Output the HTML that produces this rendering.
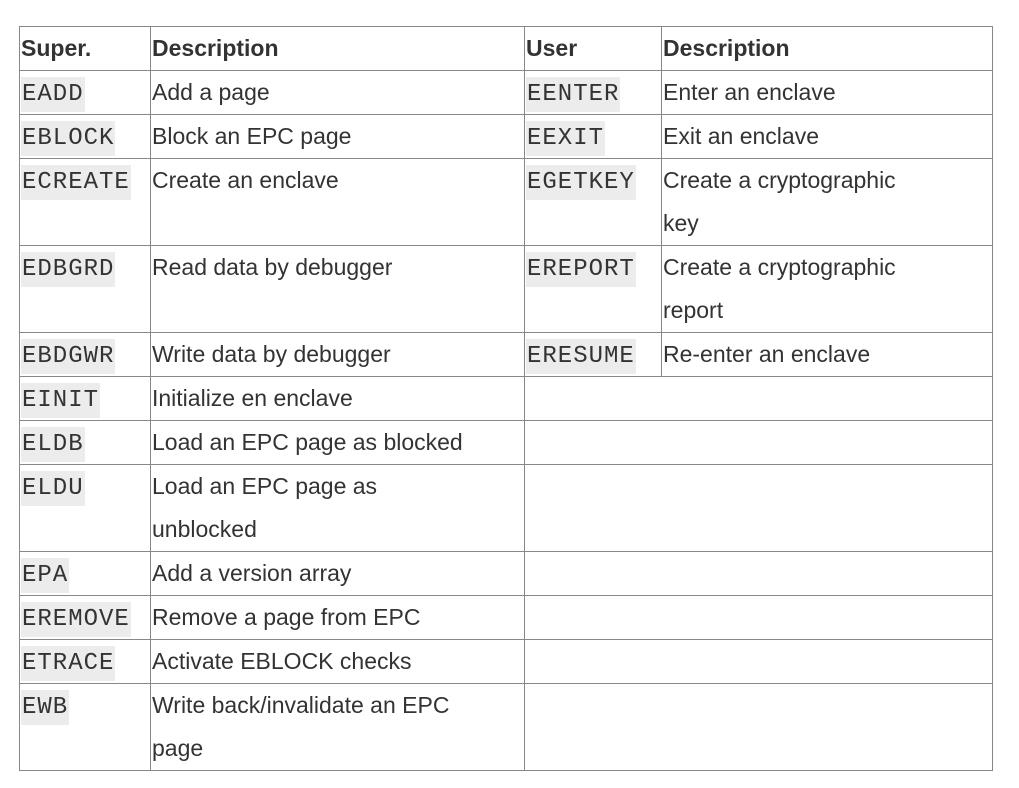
<!DOCTYPE html>
<html><head><meta charset="utf-8"><style>
html,body{margin:0;padding:0;background:#fff;}
table{position:absolute;left:19px;top:26px;border-collapse:collapse;table-layout:fixed;width:973px;
font-family:"Liberation Sans",sans-serif;font-size:23px;color:#333;}
td,th{border:1px solid #888;padding:0 0 0 1px;vertical-align:top;line-height:43px;height:43px;text-align:left;overflow:hidden;white-space:nowrap;}
th{font-weight:bold;}
tr.d td{height:86px;}
code{font-family:"Liberation Mono",monospace;font-size:24px;line-height:1;background:#ececec;padding:4px 1px;letter-spacing:1px;}
</style></head><body>
<table>
<colgroup><col style="width:131px"><col style="width:374px"><col style="width:137px"><col style="width:331px"></colgroup>
<tr><th>Super.</th><th>Description</th><th>User</th><th>Description</th></tr>
<tr><td><code>EADD</code></td><td>Add a page</td><td><code>EENTER</code></td><td>Enter an enclave</td></tr>
<tr><td><code>EBLOCK</code></td><td>Block an EPC page</td><td><code>EEXIT</code></td><td>Exit an enclave</td></tr>
<tr class="d"><td><code>ECREATE</code></td><td>Create an enclave</td><td><code>EGETKEY</code></td><td>Create a cryptographic<br>key</td></tr>
<tr class="d"><td><code>EDBGRD</code></td><td>Read data by debugger</td><td><code>EREPORT</code></td><td>Create a cryptographic<br>report</td></tr>
<tr><td><code>EBDGWR</code></td><td>Write data by debugger</td><td><code>ERESUME</code></td><td>Re-enter an enclave</td></tr>
<tr><td><code>EINIT</code></td><td>Initialize en enclave</td><td colspan="2"></td></tr>
<tr><td><code>ELDB</code></td><td>Load an EPC page as blocked</td><td colspan="2"></td></tr>
<tr class="d"><td><code>ELDU</code></td><td>Load an EPC page as<br>unblocked</td><td colspan="2"></td></tr>
<tr><td><code>EPA</code></td><td>Add a version array</td><td colspan="2"></td></tr>
<tr><td><code>EREMOVE</code></td><td>Remove a page from EPC</td><td colspan="2"></td></tr>
<tr><td><code>ETRACE</code></td><td>Activate EBLOCK checks</td><td colspan="2"></td></tr>
<tr class="d"><td><code>EWB</code></td><td>Write back/invalidate an EPC<br>page</td><td colspan="2"></td></tr>
</table>
</body></html>
